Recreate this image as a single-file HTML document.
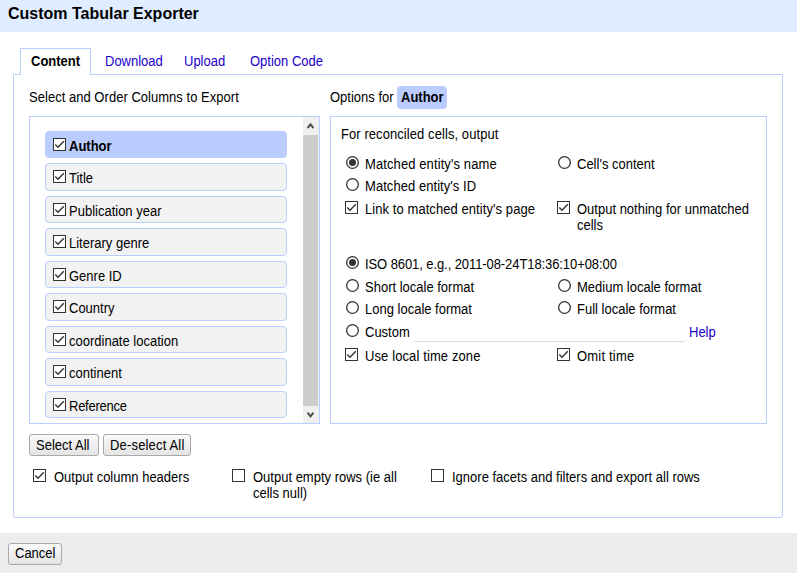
<!DOCTYPE html>
<html><head><meta charset="utf-8">
<style>
html,body{margin:0;padding:0;width:797px;height:573px;overflow:hidden;background:#fff;position:relative;font-family:"Liberation Sans",sans-serif;}
.a{position:absolute;box-sizing:border-box;}
.t{position:absolute;font-size:13px;line-height:15px;white-space:nowrap;color:#000;transform:scaleY(1.06);transform-origin:0 12px;}
.b{font-weight:bold;}
.lnk{color:#2200cc;}
.hdr{left:0;top:0;width:797px;height:32px;background:#e0ecff;}
.ftr{left:0;top:533px;width:797px;height:40px;background:#ededed;}
.panel{left:13px;top:74px;width:770px;height:444px;border:1px solid #bbccff;border-radius:0 0 3px 3px;}
.tab{left:20px;top:48px;width:71px;height:27px;border:1px solid #bbccff;border-bottom:none;background:#fff;}
.box{border:1px solid #bbccff;background:#fff;}
.item{left:45px;width:242px;height:27.5px;border:1px solid #bbccff;background:#f2f2f2;border-radius:4px;}
.item.sel{background:#bbccff;}
.badge{left:397px;top:86px;width:50px;height:23px;background:#bbccff;border-radius:4px;}
.btn{border:1px solid #a9a9a9;border-radius:3px;background:linear-gradient(#fafafa,#e4e4e4);}
.cb,.rd{position:absolute;width:13px;height:13px;}
.sb{left:303px;top:117px;width:16px;height:306px;background:#f0f0f0;}
.thumb{left:303px;top:135px;width:15px;height:271px;background:#cdcdcd;}
.uline{left:414px;top:341px;width:271px;height:1px;background:#dcdcdc;}
</style></head><body>
<svg width="0" height="0" style="position:absolute">
<defs>
<symbol id="ck" viewBox="0 0 13 13"><rect x="0.5" y="0.5" width="12" height="12" fill="#fff" stroke="#333" stroke-width="1"/><path d="M2.3 6.5 L5 9.2 L10.8 3.3" fill="none" stroke="#333" stroke-width="1.4"/></symbol>
<symbol id="uck" viewBox="0 0 13 13"><rect x="0.5" y="0.5" width="12" height="12" fill="#fff" stroke="#333" stroke-width="1"/></symbol>
<symbol id="ron" viewBox="0 0 13 13"><circle cx="6.5" cy="6.5" r="5.85" fill="#fff" stroke="#333" stroke-width="1.3"/><circle cx="6.5" cy="6.5" r="3.5" fill="#333"/></symbol>
<symbol id="roff" viewBox="0 0 13 13"><circle cx="6.5" cy="6.5" r="5.85" fill="#fff" stroke="#333" stroke-width="1.3"/></symbol>
</defs></svg>

<div class="a hdr"></div>
<div class="t b" style="left:8px;top:4px;font-size:16px;line-height:19px;transform-origin:0 15px;">Custom Tabular Exporter</div>

<div class="a panel"></div>
<div class="a tab"></div>
<div class="t b" style="left:31px;top:54px;">Content</div>
<div class="t lnk" style="left:105px;top:54px;">Download</div>
<div class="t lnk" style="left:184px;top:54px;">Upload</div>
<div class="t lnk" style="left:250px;top:54px;">Option Code</div>

<div class="t" style="left:29px;top:90px;letter-spacing:0.03px;">Select and Order Columns to Export</div>
<div class="a box" style="left:29px;top:116px;width:291px;height:308px;"></div>
<div class="a sb"></div>
<div class="a thumb"></div>
<svg class="a" style="left:303px;top:117px" width="16" height="18"><path d="M4.6 11 L7.5 7.4 L10.4 11" fill="none" stroke="#505050" stroke-width="2"/></svg>
<svg class="a" style="left:303px;top:405px" width="16" height="18"><path d="M4.6 7.6 L7.5 11.3 L10.4 7.6" fill="none" stroke="#505050" stroke-width="2"/></svg>

<div class="a item sel" style="top:130.75px;"></div>
<div class="a item" style="top:163.25px;"></div>
<div class="a item" style="top:195.75px;"></div>
<div class="a item" style="top:228.25px;"></div>
<div class="a item" style="top:260.75px;"></div>
<div class="a item" style="top:293.25px;"></div>
<div class="a item" style="top:325.75px;"></div>
<div class="a item" style="top:358.25px;"></div>
<div class="a item" style="top:390.75px;"></div>

<svg class="cb" style="left:53px;top:137.75px"><use href="#ck"/></svg><div class="t b" style="left:69px;top:138.75px;">Author</div>
<svg class="cb" style="left:53px;top:170.25px"><use href="#ck"/></svg><div class="t" style="left:69px;top:171.25px;">Title</div>
<svg class="cb" style="left:53px;top:202.75px"><use href="#ck"/></svg><div class="t" style="left:69px;top:203.75px;">Publication year</div>
<svg class="cb" style="left:53px;top:235.25px"><use href="#ck"/></svg><div class="t" style="left:69px;top:236.25px;">Literary genre</div>
<svg class="cb" style="left:53px;top:267.75px"><use href="#ck"/></svg><div class="t" style="left:69px;top:268.75px;">Genre ID</div>
<svg class="cb" style="left:53px;top:300.25px"><use href="#ck"/></svg><div class="t" style="left:69px;top:301.25px;">Country</div>
<svg class="cb" style="left:53px;top:332.75px"><use href="#ck"/></svg><div class="t" style="left:69px;top:333.75px;">coordinate location</div>
<svg class="cb" style="left:53px;top:365.25px"><use href="#ck"/></svg><div class="t" style="left:69px;top:366.25px;">continent</div>
<svg class="cb" style="left:53px;top:397.75px"><use href="#ck"/></svg><div class="t" style="left:69px;top:398.75px;letter-spacing:-0.25px;">Reference</div>

<div class="t" style="left:330px;top:90px;">Options for</div>
<div class="a badge"></div>
<div class="t b" style="left:401px;top:90px;">Author</div>
<div class="a box" style="left:330px;top:116px;width:437px;height:308px;"></div>

<div class="t" style="left:341px;top:127px;letter-spacing:0.074px;">For reconciled cells, output</div>
<svg class="rd" style="left:346px;top:156px"><use href="#ron"/></svg><div class="t" style="left:365px;top:157px;letter-spacing:0.1px;">Matched entity's name</div>
<svg class="rd" style="left:558px;top:156px"><use href="#roff"/></svg><div class="t" style="left:577px;top:157px;">Cell's content</div>
<svg class="rd" style="left:346px;top:178px"><use href="#roff"/></svg><div class="t" style="left:365px;top:179px;letter-spacing:0.055px;">Matched entity's ID</div>
<svg class="cb" style="left:345px;top:201px"><use href="#ck"/></svg><div class="t" style="left:365px;top:202px;letter-spacing:0.071px;">Link to matched entity's page</div>
<svg class="cb" style="left:557px;top:201px"><use href="#ck"/></svg><div class="t" style="left:577px;top:202px;">Output nothing for unmatched</div>
<div class="t" style="left:577px;top:218px;">cells</div>

<svg class="rd" style="left:346px;top:256px"><use href="#ron"/></svg><div class="t" style="left:365px;top:257px;letter-spacing:-0.085px;">ISO 8601, e.g., 2011-08-24T18:36:10+08:00</div>
<svg class="rd" style="left:346px;top:279px"><use href="#roff"/></svg><div class="t" style="left:365px;top:280px;">Short locale format</div>
<svg class="rd" style="left:558px;top:279px"><use href="#roff"/></svg><div class="t" style="left:577px;top:280px;">Medium locale format</div>
<svg class="rd" style="left:346px;top:301px"><use href="#roff"/></svg><div class="t" style="left:365px;top:302px;">Long locale format</div>
<svg class="rd" style="left:558px;top:301px"><use href="#roff"/></svg><div class="t" style="left:577px;top:302px;">Full locale format</div>
<svg class="rd" style="left:346px;top:324px"><use href="#roff"/></svg><div class="t" style="left:365px;top:325px;">Custom</div>
<div class="a uline"></div>
<div class="t lnk" style="left:689px;top:325px;">Help</div>
<svg class="cb" style="left:345px;top:348px"><use href="#ck"/></svg><div class="t" style="left:365px;top:349px;letter-spacing:0.11px;">Use local time zone</div>
<svg class="cb" style="left:557px;top:348px"><use href="#ck"/></svg><div class="t" style="left:577px;top:349px;letter-spacing:0.2px;">Omit time</div>

<div class="a btn" style="left:29px;top:434px;width:70px;height:22px;"></div>
<div class="t" style="left:36px;top:438px;">Select All</div>
<div class="a btn" style="left:103px;top:434px;width:88px;height:22px;"></div>
<div class="t" style="left:110px;top:438px;letter-spacing:0.17px;">De-select All</div>

<svg class="cb" style="left:33px;top:469px"><use href="#ck"/></svg><div class="t" style="left:54px;top:470px;">Output column headers</div>
<svg class="cb" style="left:232px;top:469px"><use href="#uck"/></svg><div class="t" style="left:253px;top:470px;">Output empty rows (ie all</div>
<div class="t" style="left:253px;top:486px;">cells null)</div>
<svg class="cb" style="left:431px;top:469px"><use href="#uck"/></svg><div class="t" style="left:452px;top:470px;">Ignore facets and filters and export all rows</div>

<div class="a ftr"></div>
<div class="a btn" style="left:8px;top:543px;width:54px;height:22px;"></div>
<div class="t" style="left:15px;top:546px;">Cancel</div>
</body></html>
